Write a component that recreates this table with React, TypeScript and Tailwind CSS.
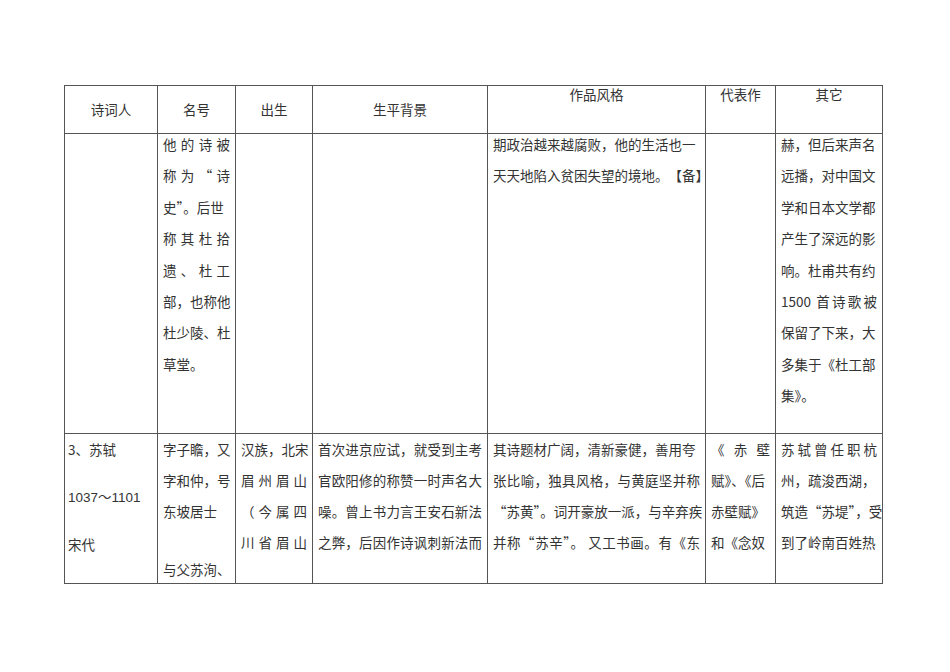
const J = '[text-align-last:justify] text-justify'

type Line = { t: string; j?: boolean; gap?: boolean }

function Cell({ lines, top = '', lh = 'leading-[31.4px]' }: { lines: Line[]; top?: string; lh?: string }) {
  return (
    <div className="border-r border-b border-[#555] px-[5px]">
      <div className={`${lh} ${top}`}>
        {lines.map((l, i) =>
          l.gap ? (
            <div key={i} className="h-[27px]" />
          ) : (
            <div key={i} className={`whitespace-nowrap ${l.j ? J : ''}`}>
              {l.t}
            </div>
          )
        )}
      </div>
    </div>
  )
}

const L = (t: string, j = false): Line => ({ t, j })
const R2 = 'leading-[31px]'

export default function App() {
  return (
    <div className="w-[950px] h-[672px] bg-white pt-[85px] pl-[64px] text-[13.5px] text-[#333] font-['Noto_Sans_CJK_SC','Liberation_Sans',sans-serif]">
      <div className="grid w-fit grid-cols-[93px_78px_77px_175px_218px_70px_107px] grid-rows-[48px_300px_150px] border-l border-t border-[#555]">
        {/* header */}
        {['诗词人', '名号', '出生', '生平背景'].map((h) => (
          <div key={h} className="border-r border-b border-[#555] flex items-center justify-center">
            {h}
          </div>
        ))}
        {['作品风格', '代表作', '其它'].map((h) => (
          <div key={h} className="border-r border-b border-[#555] text-center leading-[16px]">
            {h}
          </div>
        ))}

        {/* row 1 */}
        <div className="border-r border-b border-[#555]" />
        <Cell
          top="-mt-[5px]"
          lines={[
            L('他的诗被', true),
            L('称为“诗', true),
            L('史”。后世'),
            L('称其杜拾', true),
            L('遗、杜工', true),
            L('部，也称他', true),
            L('杜少陵、杜', true),
            L('草堂。'),
          ]}
        />
        <div className="border-r border-b border-[#555]" />
        <div className="border-r border-b border-[#555]" />
        <div className="border-r border-b border-[#555] px-[5px]">
          <div className="-mt-[5px] leading-[31.4px]">
            <div className="whitespace-nowrap">期政治越来越腐败，他的生活也一</div>
            <div className="flex justify-between whitespace-nowrap">
              <span>天天地陷入贫困失望的境地。</span>
              <span>【备】</span>
            </div>
          </div>
        </div>
        <div className="border-r border-b border-[#555]" />
        <Cell
          top="-mt-[5px]"
          lines={[
            L('赫，但后来声名'),
            L('远播，对中国文'),
            L('学和日本文学都'),
            L('产生了深远的影'),
            L('响。杜甫共有约'),
            L('1500 首诗歌被', true),
            L('保留了下来，大'),
            L('多集于《杜工部'),
            L('集》。'),
          ]}
        />

        {/* row 2 */}
        <div className="border-r border-b border-[#555] pl-[3px]">
          <div className={R2}>
            <div>3、苏轼</div>
            <div className="mt-[16px]">
              <span className="font-['Liberation_Sans']">1037</span>～<span className="font-['Liberation_Sans']">1101</span>
            </div>
            <div className="mt-[16px]">宋代</div>
          </div>
        </div>
        <Cell
          lh={R2}
          lines={[L('字子瞻，又', true), L('字和仲，号', true), L('东坡居士'), { t: '', gap: true }, L('与父苏洵、')]}
        />
        <Cell lh={R2} lines={[L('汉族，北宋', true), L('眉州眉山', true), L('（今属四', true), L('川省眉山', true)]} />
        <Cell
          lh={R2}
          lines={[
            L('首次进京应试，就受到主考', true),
            L('官欧阳修的称赞一时声名大', true),
            L('噪。曾上书力言王安石新法', true),
            L('之弊，后因作诗讽刺新法而', true),
          ]}
        />
        <Cell
          lh={R2}
          lines={[
            L('其诗题材广阔，清新豪健，善用夸'),
            L('张比喻，独具风格，与黄庭坚并称', true),
            L('“苏黄”。词开豪放一派，与辛弃疾', true),
            L('并称“苏辛”。 又工书画。有《东', true),
          ]}
        />
        <Cell lh={R2} lines={[L('《赤壁', true), L('赋》、《后'), L('赤壁赋》'), L('和《念奴')]} />
        <Cell
          lh={R2}
          lines={[L('苏轼曾任职杭', true), L('州，疏浚西湖，'), L('筑造“苏堤”，受', true), L('到了岭南百姓热')]}
        />
      </div>
    </div>
  )
}
